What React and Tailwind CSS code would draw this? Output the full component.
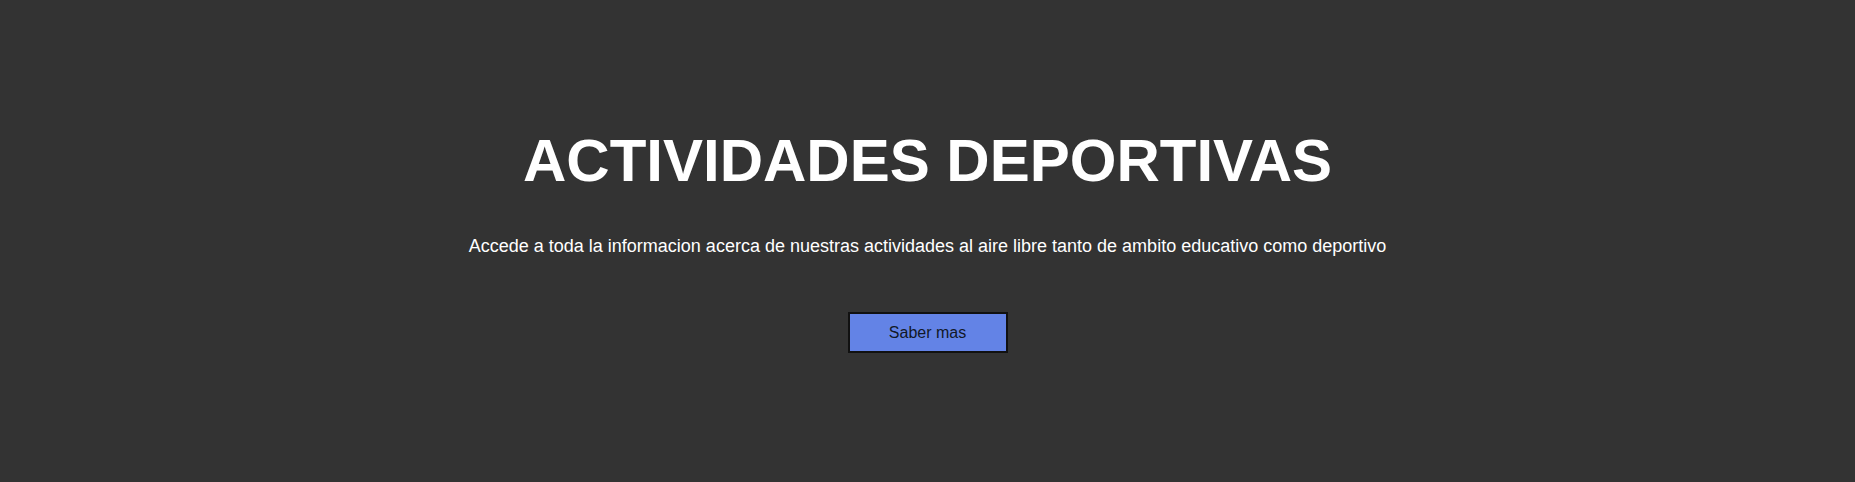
export default function App() {
  return (
    <section
      className="flex h-[482px] w-full flex-col items-center justify-center bg-[#333333] pt-[2px] text-center"
      style={{ fontFamily: '"Liberation Sans", Arial, sans-serif' }}
    >
      {/* Titulo */}
      <h1 className="text-[60px] font-bold leading-[60px] text-white">ACTIVIDADES DEPORTIVAS</h1>

      <p className="mt-[41px] text-[18px] leading-[28px] text-white">
        Accede a toda la informacion acerca de nuestras actividades al aire libre tanto de ambito educativo como deportivo
      </p>

      <button className="mt-[52px] flex h-[41px] w-[160px] items-center justify-center border-2 border-[#111111] bg-[#6383e6] text-[16px] text-[#111827]">
        Saber mas
      </button>
    </section>
  )
}
